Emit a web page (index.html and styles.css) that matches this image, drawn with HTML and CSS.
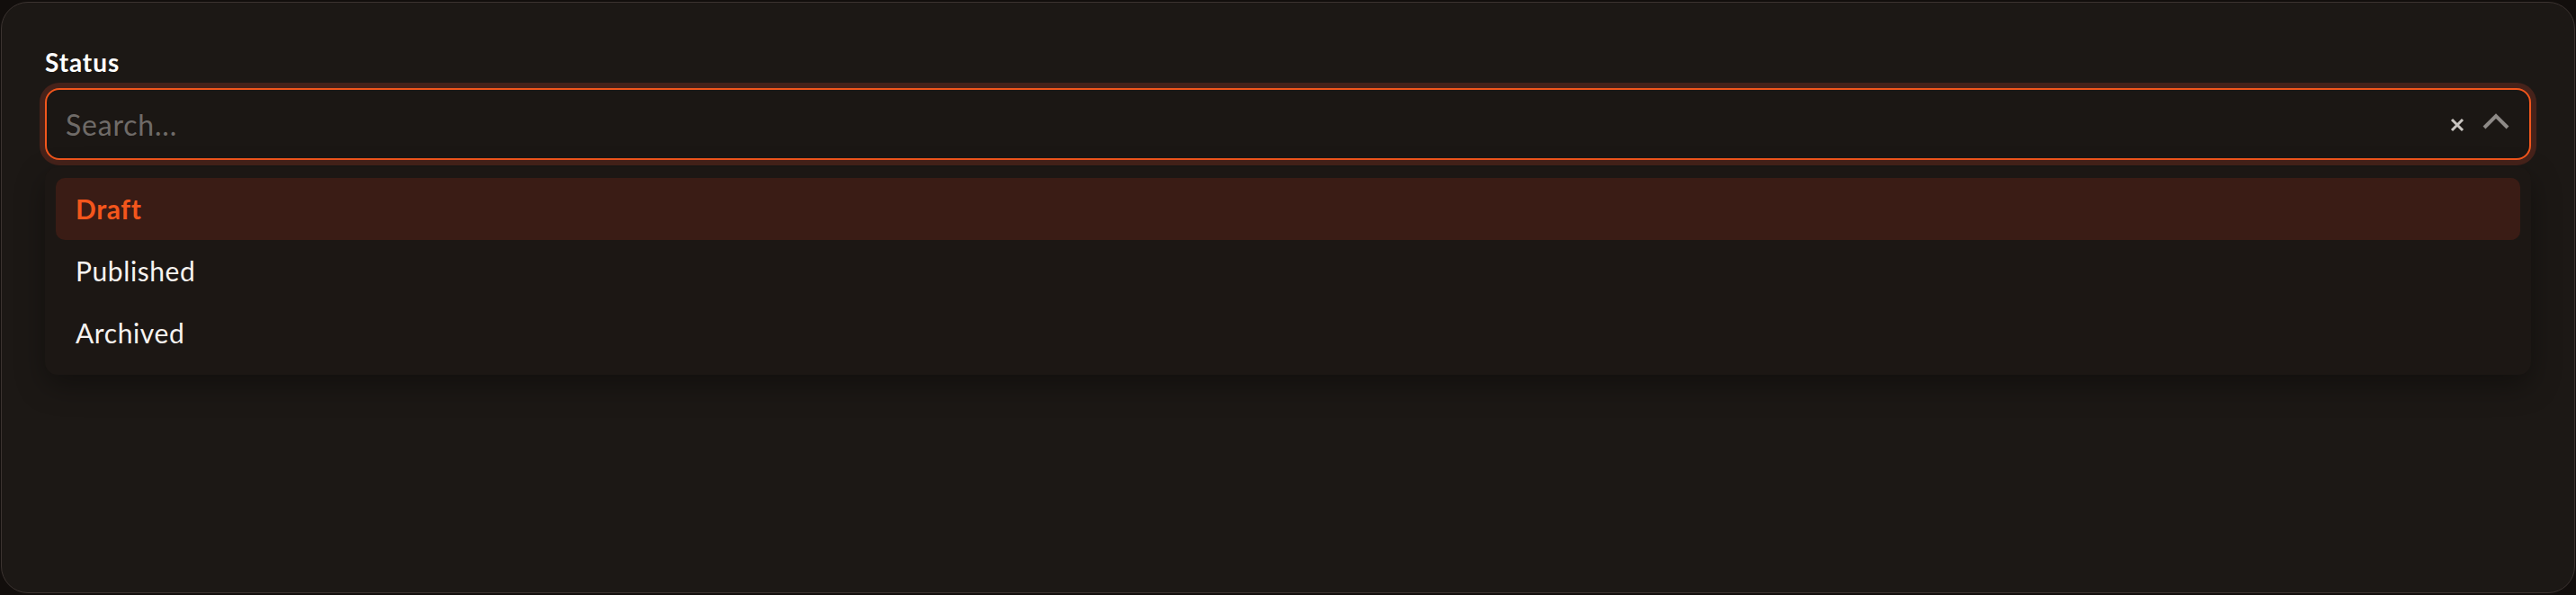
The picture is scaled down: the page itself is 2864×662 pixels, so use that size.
FILE: index.html
```html
<!DOCTYPE html>
<html lang="en">
<head>
<meta charset="utf-8">
<title>Status select</title>
<link rel="stylesheet" href="styles.css">
</head>
<body>
<div class="card">
  <label class="label">Status</label>
  <div class="combo">
    <div class="input">
      <span class="placeholder">Search...</span>
      <div class="icons">
        <svg class="icon-x" width="16" height="16" viewBox="0 0 16 16"><path d="M2 2 L14 14 M14 2 L2 14" stroke="#c9c5c1" stroke-width="3" fill="none"/></svg>
        <svg class="icon-chev" width="30" height="20" viewBox="0 0 30 20"><path d="M2 17 L15 4 L28 17" stroke="#8e8a87" stroke-width="4" fill="none"/></svg>
      </div>
    </div>
    <ul class="menu">
      <li class="item active">Draft</li>
      <li class="item">Published</li>
      <li class="item">Archived</li>
    </ul>
  </div>
</div>
</body>
</html>
```
FILE: styles.css
```css
html, body {
  margin: 0;
  padding: 0;
  background: #120e0c;
  font-family: "Lato", "Noto Sans", sans-serif;
}
.card {
  box-sizing: border-box;
  margin: 2px 1px 0 1px;
  height: 658px;
  border: 1px solid #3b3330;
  border-radius: 30px;
  background: #1c1815;
  padding: 49px 48px 0 48px;
}
.label {
  display: block;
  color: #ffffff;
  font-weight: 700;
  font-size: 28px;
  letter-spacing: 0.9px;
  line-height: 34px;
  height: 34px;
}
.combo {
  margin-top: 12px;
}
.input {
  box-sizing: border-box;
  height: 80px;
  border: 2px solid #f2561c;
  border-radius: 16px;
  box-shadow: 0 0 0 6px #46221a;
  background: #1b1714;
  display: flex;
  align-items: center;
  justify-content: space-between;
  padding: 0 22px 0 21px;
}
.placeholder {
  color: #6f6b68;
  font-size: 32px;
  letter-spacing: 0.8px;
}
.icons {
  display: flex;
  align-items: center;
  gap: 20px;
}
.icon-x {
  margin-top: 2px;
}
.icon-chev {
  margin-top: -6px;
}
.menu {
  list-style: none;
  margin: 8px 0 0 0;
  padding: 12px;
  border-radius: 14px;
  background: #1c1714;
  box-shadow: 0 12px 32px rgba(0,0,0,0.35);
}
.item {
  height: 69px;
  display: flex;
  align-items: center;
  padding-left: 22px;
  padding-bottom: 2px;
  box-sizing: border-box;
  border-radius: 10px;
  color: #f7f3f0;
  font-size: 30px;
  letter-spacing: 0.6px;
}
.item.active {
  background: #3a1c15;
  color: #f4561c;
  font-weight: 700;
}
```
